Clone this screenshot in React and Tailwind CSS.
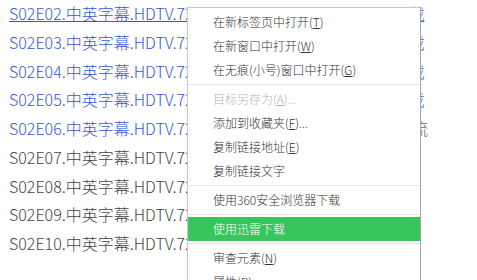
import React from 'react';

const rows = [
    { ep: 'S02E02', blue: true, tail: true, active: true },
    { ep: 'S02E03', blue: true, tail: true },
    { ep: 'S02E04', blue: true, tail: true },
    { ep: 'S02E05', blue: true, tail: true },
    { ep: 'S02E06', blue: true, note: true },
    { ep: 'S02E07', blue: false },
    { ep: 'S02E08', blue: false },
    { ep: 'S02E09', blue: false },
    { ep: 'S02E10', blue: false },
];

const menu = [
    { label: '在新标签页中打开', key: 'T' },
    { label: '在新窗口中打开', key: 'W' },
    { label: '在无痕(小号)窗口中打开', key: 'G' },
    { sep: true },
    { label: '目标另存为', key: 'A', more: true, disabled: true },
    { label: '添加到收藏夹', key: 'F', more: true },
    { label: '复制链接地址', key: 'E' },
    { label: '复制链接文字' },
    { sep: true },
    { label: '使用360安全浏览器下载' },
    { sep: true },
    { label: '使用迅雷下载', active: true },
    { sep: true },
    { label: '审查元素', key: 'N' },
    { label: '属性', key: 'P' },
];

function MenuItem({ item }) {
    if (item.sep) {
        return <div className="my-[2px] h-px bg-[#e6e6e6]" />;
    }
    let tone = 'text-[#333333]';
    if (item.disabled) tone = 'text-[#b4b4b4]';
    if (item.active) tone = 'bg-[#38c55c] text-white';
    return (
        <div className={`flex h-6 items-center pl-[25px] text-[12px] ${tone}`}>
            {item.label}
            {item.key && (
                <>
                    (<span className="underline">{item.key}</span>)
                </>
            )}
            {item.more && '...'}
        </div>
    );
}

export default function App() {
    return (
        <div
            className="relative h-[280px] w-[477px] overflow-hidden bg-white font-light"
            style={{ fontFamily: '"Noto Sans CJK SC", "Noto Sans", sans-serif' }}
        >
            {/* link list */}
            <ul className="-mt-[1px] pl-[9px] text-[16px] leading-[28.75px]">
                {rows.map((r) => (
                    <li key={r.ep} className="whitespace-pre">
                        {r.blue ? (
                            <a className={`text-[#3458d4] ${r.active ? 'underline' : ''}`}>
                                {r.ep}.中英字幕.HDTV.720p.mp4{r.tail ? '　　　　　　　迅雷下载' : ''}
                            </a>
                        ) : (
                            <span className="text-[#444444]">{r.ep}.中英字幕.HDTV.720p.mp4</span>
                        )}
                        {r.note && <span className="text-[#666666]">{'　　　　　　　　　　 流'}</span>}
                    </li>
                ))}
            </ul>

            {/* context menu */}
            <div className="absolute left-[187px] top-[7px] w-[234px] border border-l-[#c9c9c9] border-t-[#c9c9c9] border-r-[#a6a6a6] border-b-[#a6a6a6] bg-white pt-[2px] pb-1">
                {menu.map((item, i) => (
                    <MenuItem key={i} item={item} />
                ))}
            </div>
        </div>
    );
}
